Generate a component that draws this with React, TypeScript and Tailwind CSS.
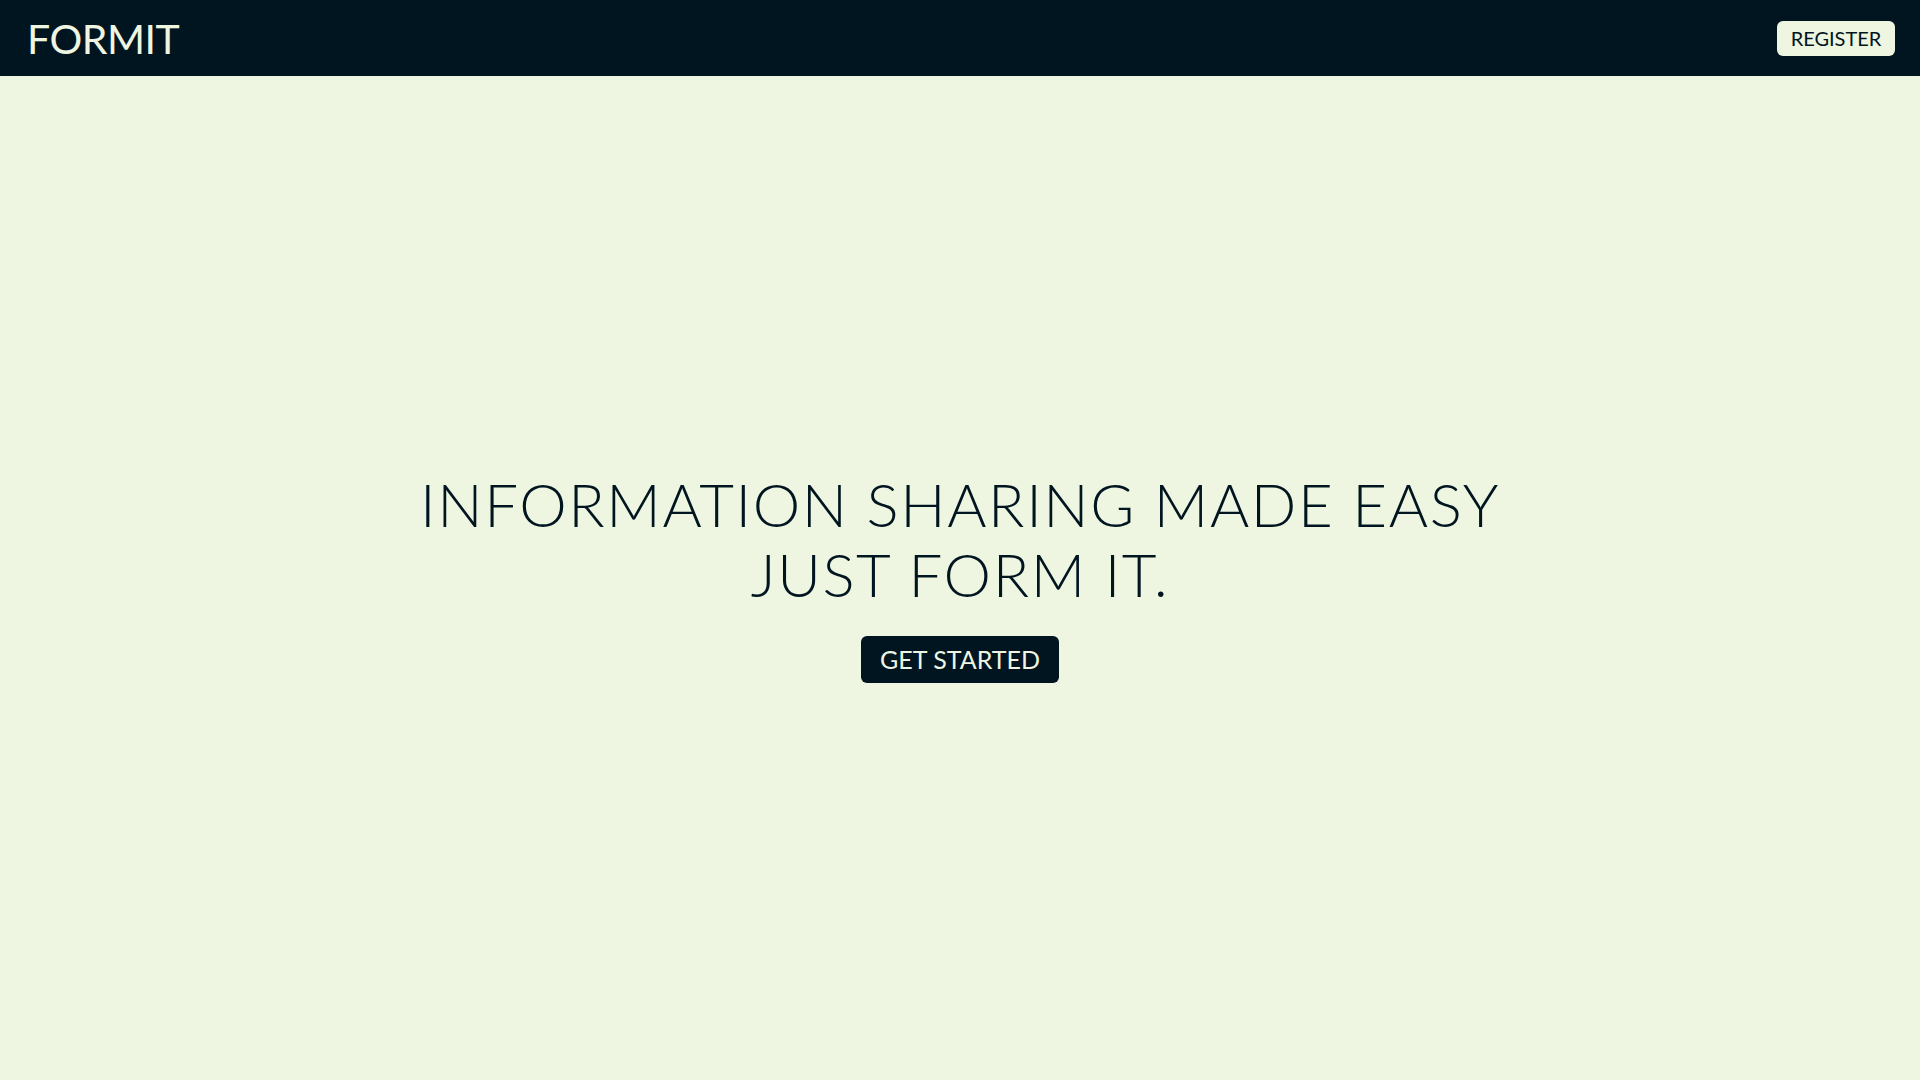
import React from 'react';

const App = () => {
  return (
    <div className="min-h-screen bg-[#eef5e0] flex flex-col" style={{ fontFamily: 'Lato, "Open Sans", sans-serif' }}>
      {/* Header */}
      <header className="h-[76px] bg-[#011520] flex items-center justify-between px-[25px]">
        <a href="#" className="text-[41px] leading-none text-[#eef5e0] tracking-[-0.5px] pl-[2px]">
          FORMIT
        </a>
        <button className="h-[35px] w-[118px] rounded-[6px] bg-[#eef5e0] text-[#011520] text-[20px] leading-none">
          REGISTER
        </button>
      </header>

      {/* Hero */}
      <main className="flex-1 flex flex-col items-center justify-center">
        <h1 className="text-center text-[60px] leading-[70px] font-light text-[#011520] tracking-[1.6px] -mt-[4px]">
          INFORMATION SHARING MADE EASY
          <br />
          JUST FORM IT.
        </h1>
        <button className="mt-[27px] h-[47px] w-[198px] rounded-[6px] bg-[#011520] text-[#eef5e0] text-[25px] leading-none">
          GET STARTED
        </button>
      </main>
    </div>
  );
};

export default App;
